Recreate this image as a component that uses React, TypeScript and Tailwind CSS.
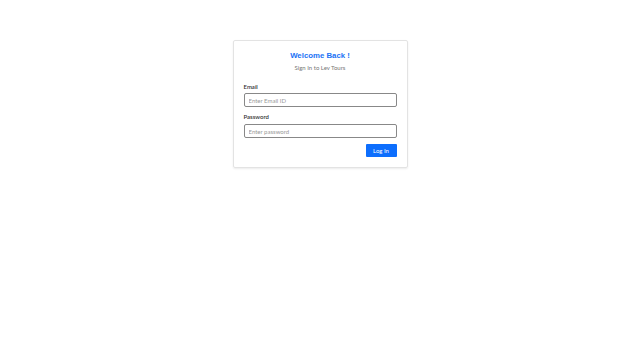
export default function App() {
  return (
    <div className="w-[640px] h-[360px] bg-white flex justify-center" style={{ fontFamily: 'Lato, "Open Sans", sans-serif' }}>
      <div className="mt-[40px] w-[175px] h-[128px] border border-[#e3e3e3] rounded-[2px] shadow-[0_1px_2px_rgba(0,0,0,0.08)] px-[10px] pt-[10px]">
        <h1 className="text-center text-[#1a73f5] font-bold text-[7.8px] leading-[10px]" style={{ fontFamily: '"Liberation Sans", Arial, sans-serif' }}>
          Welcome Back !
        </h1>
        <p className="text-center text-[#777] text-[6px] leading-[8px] mt-[3px]">Sign In to Lev Tours</p>

        <label className="block text-[6px] leading-[7px] font-semibold text-[#333] mt-[11px]">Email</label>
        <input
          type="email"
          placeholder="Enter Email ID"
          className="block w-full h-[14px] mt-[3px] border border-[#888] rounded-[2px] px-[4px] text-[6px] placeholder:text-[#999] outline-none"
        />

        <label className="block text-[6px] leading-[7px] font-semibold text-[#333] mt-[6px]">Password</label>
        <input
          type="password"
          placeholder="Enter password"
          className="block w-full h-[14px] mt-[4px] border border-[#888] rounded-[2px] px-[4px] text-[6px] placeholder:text-[#999] outline-none"
        />

        <div className="flex justify-end mt-[6px]">
          <button className="w-[31px] h-[13px] bg-[#0d6efd] text-white text-[6px] rounded-[1px]">Log In</button>
        </div>
      </div>
    </div>
  );
}
